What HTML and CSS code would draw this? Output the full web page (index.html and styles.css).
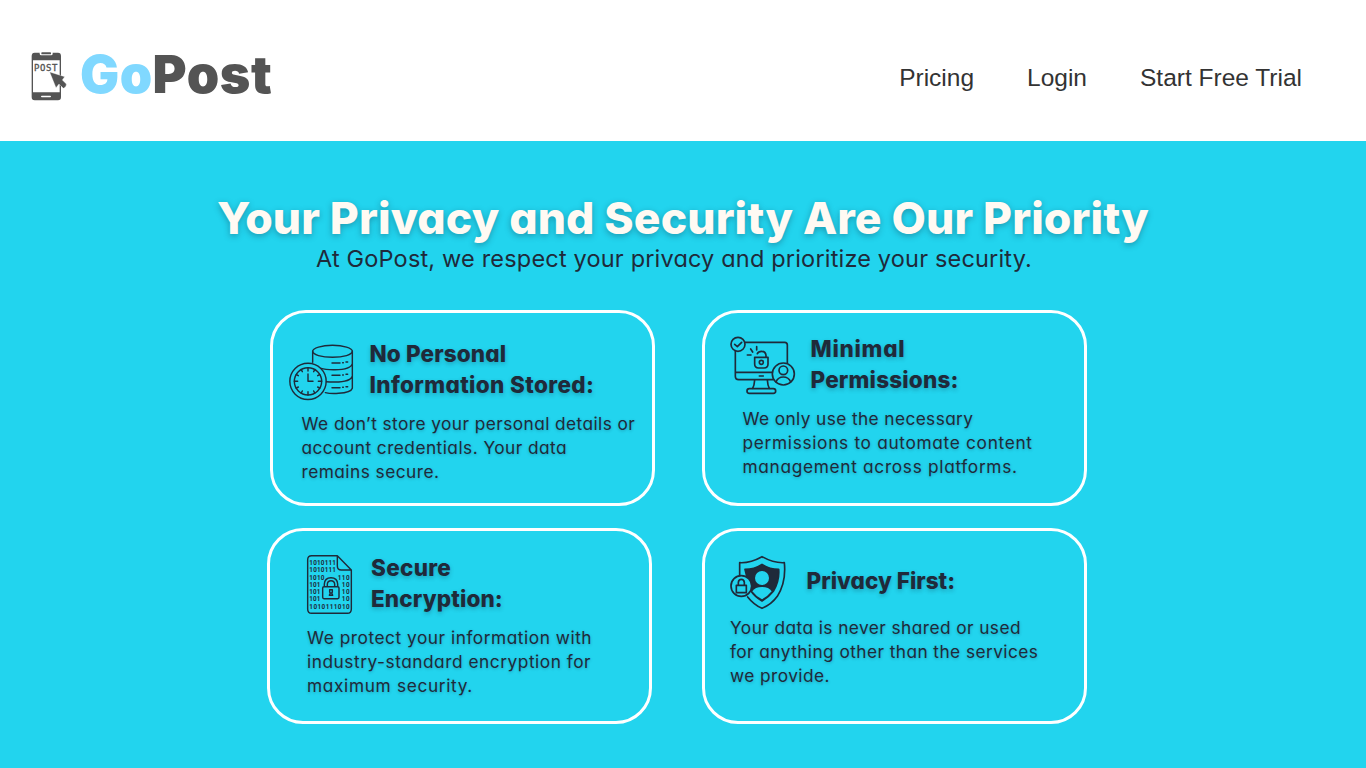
FILE: index.html
```html
<!DOCTYPE html>
<html lang="en">
<head>
<meta charset="utf-8">
<title>GoPost</title>
<link rel="stylesheet" href="styles.css">
</head>
<body>
<header class="header">
  <a class="brand">
    <svg class="brand-icon" viewBox="0 0 180 192" width="60" height="64">
      <path fill="#545454" fill-rule="evenodd" d="M44 26H114Q123 26 123 36V159Q123 169 114 169H44Q35 169 35 159V36Q35 26 44 26ZM39 49V145H119V49Z"/>
      <path fill="#fff" d="M59 24H98V29Q98 34 93 34H64Q59 34 59 29Z"/>
      <rect fill="#545454" x="64" y="25" width="29" height="6" rx="2"/>
      <rect fill="#fff" x="63" y="155" width="30" height="5" rx="2.500"/>
      <text class="brand-label" x="42" y="82" textLength="70">POST</text>
      <path fill="#545454" stroke="#fff" stroke-width="1" d="M89 84L134 98L127 108L139 120Q140 128 130 133L117 120L108 131Z"/>
    </svg>
    <span class="brand-name"><span class="brand-go">Go</span><span class="brand-post">Post</span></span>
  </a>
  <nav class="nav"><a>Pricing</a><a>Login</a><a>Start Free Trial</a></nav>
</header>
<main class="main">
  <h1 class="title">Your Privacy and Security Are Our Priority</h1>
  <p class="subtitle">At GoPost, we respect your privacy and prioritize your security.</p>
  <section class="cards">
    <article class="card card-storage">
      <div class="card-head">
        <svg class="icon" viewBox="0 0 240 225" width="80" height="75">
          <ellipse cx="157.500" cy="49" rx="59.500" ry="18"/>
          <path d="M98 49V82M217 49V160Q213 173 176 175Q153 177 136 173M217 86Q212 105 160 104Q135 104 123 100M217 123Q212 141 165 141Q148 141 139 140"/>
          <path d="M156 84H180M188 83H190M198 81H203M156 121H180M188 120H190M198 118H203M156 158H180M188 157H190M198 155H203"/>
          <circle cx="84" cy="139" r="54.500"/>
          <circle cx="84" cy="139" r="41"/>
          <path d="M84 117V139H99M84 98V108M84 170V180M43 139H53M115 139H125M63.500 103.500L67 110M104.500 103.500L101 110M48.500 118.500L55 122M119.500 118.500L113 122M48.500 159.500L55 156M119.500 159.500L113 156M63.500 174.500L67 168M104.500 174.500L101 168"/>
        </svg>
        <h2 class="card-title"><span class="t1">No Personal</span><span class="t2">Information Stored:</span></h2>
      </div>
      <p class="card-text"><span>We don’t store your personal details or</span><span>account credentials. Your data</span><span>remains secure.</span></p>
    </article>
    <article class="card card-permissions">
      <div class="card-head">
        <svg class="icon icon-bold" viewBox="0 0 240 225" width="80" height="75">
          <path d="M69 43H188Q196 43 196 51V104M40 68V145Q40 155 50 155H152M40 133H150M112 144H124M98 156Q97 172 92 181M136 156Q137 172 142 181"/>
          <rect x="75" y="182" width="86" height="14" rx="7"/>
          <circle cx="48" cy="49" r="21"/>
          <path d="M38 49L46 56L59 43M76 81H87M86 63L92 72M104 56V66"/>
          <path d="M98 88H138V108Q138 120 126 120H110Q98 120 98 108ZM132 87V82Q131 70 119 70Q109 70 106 77"/>
          <circle cx="118" cy="103" r="6"/>
          <circle cx="184" cy="138" r="33"/>
          <circle cx="184" cy="127" r="13"/>
          <path d="M162 162Q168 147 184 147Q200 147 206 162"/>
        </svg>
        <h2 class="card-title"><span class="t1">Minimal</span><span class="t2">Permissions:</span></h2>
      </div>
      <p class="card-text"><span>We only use the necessary</span><span>permissions to automate content</span><span>management across platforms.</span></p>
    </article>
    <article class="card card-encryption">
      <div class="card-head">
        <svg class="icon" viewBox="0 0 198 222" width="66" height="74">
          <path d="M124 23H47Q35 23 35 35V183Q35 196 47 196H154Q166 196 166 183V66ZM124 23V54Q124 66 136 66H166"/>
          <g class="bits">
            <text x="40" y="52" textLength="80">1010111</text>
            <text x="40" y="73" textLength="80">1010111</text>
            <text x="40" y="96" textLength="45">1010</text><text x="125" y="96" textLength="36">110</text>
            <text x="40" y="117" textLength="33">101</text><text x="137" y="117" textLength="24">10</text>
            <text x="40" y="138" textLength="33">101</text><text x="137" y="138" textLength="24">10</text>
            <text x="40" y="159" textLength="33">101</text><text x="137" y="159" textLength="24">10</text>
            <text x="40" y="182" textLength="121">1010111010</text>
          </g>
          <path d="M85 115V108Q86 89 105 89Q124 89 125 108V115M94 115V108Q95 98 105 98Q115 98 116 108V115"/>
          <rect x="80" y="116" width="49" height="36" rx="4"/>
          <path d="M101 125H109V132L107 135L110 142H100L103 135L101 132Z"/>
        </svg>
        <h2 class="card-title"><span class="t1">Secure</span><span class="t2">Encryption:</span></h2>
      </div>
      <p class="card-text"><span>We protect your information with</span><span>industry-standard encryption for</span><span>maximum security.</span></p>
    </article>
    <article class="card card-privacy">
      <div class="card-head">
        <svg class="icon icon-bold" viewBox="0 0 216 204" width="72" height="68">
          <path d="M53 83V44Q84 46 120 26Q156 46 187 44Q193 102 166 145Q148 170 120 181Q96 171 77 147"/>
          <path class="solid" d="M69 64Q97 64 120 49Q143 64 170 64Q173 98 154 130Q140 148 120 159Q98 147 84 125Z"/>
          <circle class="hole" cx="120" cy="90" r="21"/>
          <path class="hole" d="M91 130Q99 117 120 117Q141 117 149 130Q137 145 120 154Q101 144 91 130Z"/>
          <circle class="lock-bg" cx="58" cy="114" r="31"/>
          <path d="M43 112H73V134H43ZM49 112V103Q50 94 58 94Q66 94 67 103V112"/>
        </svg>
        <h2 class="card-title"><span class="t1">Privacy First:</span></h2>
      </div>
      <p class="card-text"><span>Your data is never shared or used</span><span>for anything other than the services</span><span>we provide.</span></p>
    </article>
  </section>
</main>
</body>
</html>
```
FILE: styles.css
```css
* { box-sizing: border-box; }
body {
  margin: 0;
  height: 768px;
  overflow: hidden;
  background: #22d4ee;
  color: #1f2a3a;
  font-family: Inter, "Noto Sans", sans-serif;
  font-feature-settings: "cv11";
}
h1, h2, p { margin: 0; }
.header {
  display: flex;
  justify-content: space-between;
  align-items: flex-start;
  height: 141px;
  padding: 44px 64px 0 20px;
  background: #fff;
}
.brand { display: flex; align-items: flex-start; }
.brand-icon { display: block; }
.brand-label { font: 400 27px "DejaVu Sans Mono", monospace; fill: #545454; stroke: #545454; stroke-width: 1; }
.brand-name { font-size: 52px; line-height: 60px; font-weight: 900; margin-top: 1px; white-space: nowrap; }
.brand-go { color: #80d8ff; letter-spacing: 0.400px; }
.brand-post { color: #545454; letter-spacing: 0.600px; }
.nav {
  display: flex;
  gap: 53px;
  padding-top: 19.500px;
  font-family: "Liberation Sans", Arial, sans-serif;
  font-size: 24.500px;
  line-height: 28px;
  color: #333;
}
.main { padding-top: 52px; }
.title {
  text-align: center;
  font-size: 44.500px;
  line-height: 50px;
  font-weight: 800;
  letter-spacing: 0.110px;
  color: #fffaf3;
  text-shadow: 0 2px 6px rgba(20, 60, 80, 0.400);
  white-space: nowrap;
}
.subtitle {
  padding: 1px 18px 0 0;
  text-align: center;
  font-size: 23.500px;
  line-height: 30px;
  letter-spacing: 0.180px;
}
.cards {
  display: grid;
  grid-template-columns: 385px 385px;
  grid-auto-rows: 196px;
  gap: 22.500px 50px;
  margin: 35.500px 0 0 267px;
}
.card { width: 385px; border: 3px solid #fff; border-radius: 36px; }
.card-head { display: flex; align-items: flex-start; }
.icon {
  flex: none;
  display: block;
  fill: none;
  stroke: #1f2a3a;
  stroke-width: 4.300;
  stroke-linecap: round;
  stroke-linejoin: round;
}
.icon-bold { stroke-width: 5; }
.icon .solid { fill: #1f2a3a; }
.icon .hole { fill: #22d4ee; stroke: none; }
.icon .lock-bg { fill: #22d4ee; }
.bits { font: 700 19px Roboto, sans-serif; fill: #1f2a3a; stroke: none; }
.card-title { font-size: 22.500px; line-height: 31px; font-weight: 800; text-shadow: 0 2px 4px rgba(20, 50, 70, 0.300); }
.card-title span, .card-text span { display: block; white-space: nowrap; }
.card-text { font-size: 17.300px; line-height: 24px; letter-spacing: 0.460px; text-shadow: 0 1px 3px rgba(20, 50, 70, 0.300); }

.card-storage { margin-left: 3px; padding: 22.500px 0 0 7px; }
.card-storage .card-title { margin: 3px 0 0 9.500px; }
.card-storage .t1 { letter-spacing: 0.120px; }
.card-storage .t2 { letter-spacing: 0.350px; }
.card-storage .card-text { margin: 1.500px 0 0 21.500px; }
.card-storage .card-text span:first-child { letter-spacing: 0.430px; }

.card-permissions { padding: 15.500px 0 0 17px; }
.card-permissions .card-title { margin: 5px 0 0 8.500px; }
.card-permissions .t1 { letter-spacing: 0.700px; }
.card-permissions .t2 { letter-spacing: 0.180px; }
.card-permissions .card-text { margin: 3.500px 0 0 20.500px; letter-spacing: 0.680px; }
.card-permissions .card-text span:first-child { letter-spacing: 0.390px; }

.card-encryption { padding: 17px 0 0 26px; }
.card-encryption .card-title { margin: 4px 0 0 9px; }
.card-encryption .t1 { letter-spacing: 0.300px; }
.card-encryption .t2 { letter-spacing: 0.120px; }
.card-encryption .card-text { margin: 3.500px 0 0 11px; letter-spacing: 0.530px; }
.card-encryption .card-text span:last-child { letter-spacing: 0.650px; }

.card-privacy { padding: 17px 0 0 17px; }
.card-privacy .card-title { margin: 17px 0 0 12.500px; letter-spacing: 0; }
.card-privacy .card-text { margin: -0.500px 0 0 8px; letter-spacing: 0.430px; }
```
